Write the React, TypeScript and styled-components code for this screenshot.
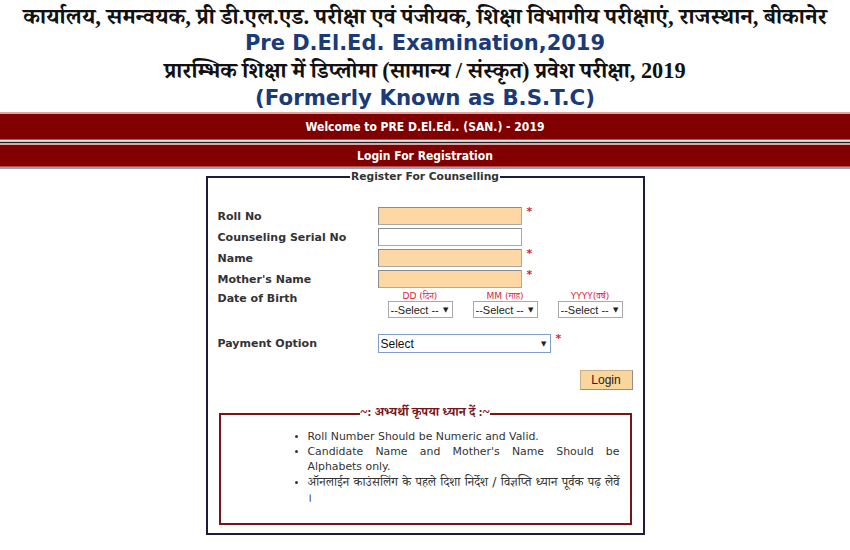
import React from "react";
import styled, { createGlobalStyle } from "styled-components";

const hindiStack = `"Liberation Serif", "Noto Serif Devanagari", "Noto Sans Devanagari", "Lohit Devanagari", "Mangal", serif`;

const GlobalStyle = createGlobalStyle`
  html, body {
    margin: 0;
    padding: 0;
    background: #ffffff;
  }
  body {
    font-family: "DejaVu Sans", Verdana, sans-serif;
    color: #333;
  }
`;

const Header = styled.header`
  text-align: center;
  padding-top: 3px;
`;

const HindiTitle = styled.div<{ $size: number }>`
  font-family: ${hindiStack};
  font-weight: bold;
  font-size: ${(p) => p.$size}px;
  line-height: 27px;
  height: 27px;
  color: #111;
  white-space: nowrap;
`;

const EnglishTitle = styled.div<{ $size: number }>`
  font-family: "DejaVu Sans", Verdana, sans-serif;
  font-weight: bold;
  font-size: ${(p) => p.$size}px;
  line-height: 27px;
  color: #1b3a78;
`;

const Bars = styled.div`
  margin-top: 1px;
  border-bottom: 2px solid #9a9fb8;
`;

const Bar = styled.div<{ $h: number }>`
  box-sizing: border-box;
  height: ${(p) => p.$h}px;
  background: #800000;
  border-top: 2px solid #e4a3a3;
  border-bottom: 1px solid #b05050;
  color: #fff;
  font-family: "DejaVu Sans Condensed", "DejaVu Sans", sans-serif;
  font-weight: bold;
  font-size: 12px;
  display: flex;
  align-items: center;
  justify-content: center;
`;

const BarGap = styled.div`
  height: 1px;
  border-top: 1px solid #e9e9e9;
  border-bottom: 1px solid #222;
  background: #c8c8c8;
`;

const Panel = styled.fieldset`
  width: 436px;
  margin: 1px auto 0;
  padding: 14px 10px 8px;
  border: 2px solid #1c1c3c;
  box-sizing: border-box;
`;

const PanelLegend = styled.legend`
  margin: 0 auto;
  padding: 0 1px;
  font-weight: bold;
  font-size: 10.7px;
  color: #333;
`;

const Form = styled.div`
  display: grid;
  grid-template-columns: 160px 1fr;
  row-gap: 3px;
  align-items: center;
`;

const Label = styled.div<{ $top?: boolean }>`
  font-weight: bold;
  font-size: 11px;
  color: #333;
  align-self: ${(p) => (p.$top ? "start" : "center")};
  padding-top: ${(p) => (p.$top ? "1px" : "0")};
`;

const FieldCell = styled.div`
  display: flex;
  align-items: center;
  gap: 5px;
`;

const TextInput = styled.input<{ $filled?: boolean }>`
  width: 144px;
  height: 18px;
  box-sizing: border-box;
  margin: 0;
  border: 1px solid #a9a9a9;
  border-top-color: #8c8c8c;
  border-left-color: #8c8c8c;
  background: ${(p) => (p.$filled ? "#fdd7a4" : "#ffffff")};
  padding: 0 2px;
`;

const Star = styled.span`
  color: #e0243a;
  font-size: 11px;
  font-weight: bold;
  align-self: flex-start;
  line-height: 10px;
`;

const DobGrid = styled.div`
  display: grid;
  grid-template-columns: repeat(3, 85px);
  justify-items: center;
  row-gap: 0;
`;

const DobCaption = styled.span`
  font-family: ${`"DejaVu Sans", ` + hindiStack};
  font-size: 9px;
  color: #e0243a;
  line-height: 10px;
`;

const SelectWrap = styled.span`
  position: relative;
  display: flex;
`;

const Arrow = styled.span`
  position: absolute;
  right: 4px;
  top: 50%;
  transform: translateY(-50%);
  font-size: 7px;
  color: #222;
  pointer-events: none;
`;

const SmallSelect = styled.select`
  appearance: none;
  width: 65px;
  height: 17px;
  font-family: "Liberation Sans", Arial, sans-serif;
  font-size: 11px;
  border: 1px solid #a9a9a9;
  border-radius: 0;
  background: #fff;
  color: #222;
  padding: 0 0 0 2px;
  margin: 0;
`;

const Spacer = styled.div<{ $h: number }>`
  height: ${(p) => p.$h}px;
  grid-column: 1 / -1;
`;

const PaySelect = styled.select`
  appearance: none;
  width: 173px;
  height: 19px;
  font-family: "Liberation Sans", Arial, sans-serif;
  font-size: 12px;
  border: 1px solid #7f9dc9;
  border-radius: 0;
  background: #fff;
  color: #111;
  padding: 0 2px;
  margin: 0;
`;

const ButtonRow = styled.div`
  display: flex;
  justify-content: flex-end;
  padding: 17px 0 0;
`;

const LoginButton = styled.button`
  width: 53px;
  height: 20px;
  font-family: "Liberation Sans", Arial, sans-serif;
  font-size: 12px;
  color: #222;
  background: #fbd69c;
  border: 1px solid #c9b08a;
  border-right-color: #8f8f8f;
  border-bottom-color: #8f8f8f;
  padding: 0;
`;

const Notice = styled.fieldset`
  margin: 14px 1px 0;
  padding: 5px 10px 0;
  border: 2px solid #7a1418;
  height: 121px;
  box-sizing: border-box;
`;

const NoticeLegend = styled.legend`
  margin: 0 auto;
  padding: 0 1px;
  font-family: ${hindiStack};
  font-weight: bold;
  font-size: 12.8px;
  color: #7a1418;
`;

const NoticeList = styled.ul`
  margin: 0;
  padding: 0 0 0 77px;
  list-style: disc;
`;

const NoticeItem = styled.li`
  font-size: 10.9px;
  line-height: 15px;
  color: #333;
  text-align: justify;
  font-family: ${`"DejaVu Sans", ` + hindiStack};

  &::marker {
    font-size: 10px;
  }
`;

const HindiText = styled.span`
  font-size: 12.6px;
`;

const selectPlaceholder = ["--Select --"];

const DobSelect = () => (
  <SelectWrap>
    <SmallSelect>
      {selectPlaceholder.map((d) => (
        <option key={d}>{d}</option>
      ))}
    </SmallSelect>
    <Arrow>▼</Arrow>
  </SelectWrap>
);

export default function App() {
  return (
    <>
      <GlobalStyle />
      <Header>
        <HindiTitle $size={22.7}>
          कार्यालय, समन्वयक, प्री डी.एल.एड. परीक्षा एवं पंजीयक, शिक्षा विभागीय परीक्षाएं, राजस्थान, बीकानेर
        </HindiTitle>
        <EnglishTitle $size={21}>Pre D.El.Ed. Examination,2019</EnglishTitle>
        <HindiTitle $size={22.4}>
          प्रारम्भिक शिक्षा में डिप्लोमा (सामान्य / संस्कृत) प्रवेश परीक्षा, 2019
        </HindiTitle>
        <EnglishTitle $size={21.3}>(Formerly Known as B.S.T.C)</EnglishTitle>
      </Header>

      <Bars>
        <Bar $h={28}>Welcome to PRE D.El.Ed.. (SAN.) - 2019</Bar>
        <BarGap />
        <Bar $h={24}>Login For Registration</Bar>
      </Bars>

      <Panel>
        <PanelLegend>Register For Counselling</PanelLegend>
        <Form>
          <Spacer $h={7} />
          <Label>Roll No</Label>
          <FieldCell>
            <TextInput $filled />
            <Star>*</Star>
          </FieldCell>
          <Label>Counseling Serial No</Label>
          <FieldCell>
            <TextInput />
          </FieldCell>
          <Label>Name</Label>
          <FieldCell>
            <TextInput $filled />
            <Star>*</Star>
          </FieldCell>
          <Label>Mother's Name</Label>
          <FieldCell>
            <TextInput $filled />
            <Star>*</Star>
          </FieldCell>
          <Label $top>Date of Birth</Label>
          <DobGrid>
            <DobCaption>DD (दिन)</DobCaption>
            <DobCaption>MM (माह)</DobCaption>
            <DobCaption>YYYY(वर्ष)</DobCaption>
            <DobSelect />
            <DobSelect />
            <DobSelect />
          </DobGrid>
          <Spacer $h={10} />
          <Label>Payment Option</Label>
          <FieldCell>
            <SelectWrap>
              <PaySelect>
                <option>Select</option>
              </PaySelect>
              <Arrow>▼</Arrow>
            </SelectWrap>
            <Star>*</Star>
          </FieldCell>
        </Form>
        <ButtonRow>
          <LoginButton>Login</LoginButton>
        </ButtonRow>
        <Notice>
          <NoticeLegend>~: अभ्यर्थी कृपया ध्यान दें :~</NoticeLegend>
          <NoticeList>
            <NoticeItem>Roll Number Should be Numeric and Valid.</NoticeItem>
            <NoticeItem>Candidate Name and Mother's Name Should be Alphabets only.</NoticeItem>
            <NoticeItem>
              <HindiText>ऑनलाईन काउंसलिंग के पहले दिशा निर्देश / विज्ञप्ति ध्यान पूर्वक पढ़ लेवें ।</HindiText>
            </NoticeItem>
          </NoticeList>
        </Notice>
      </Panel>
    </>
  );
}
